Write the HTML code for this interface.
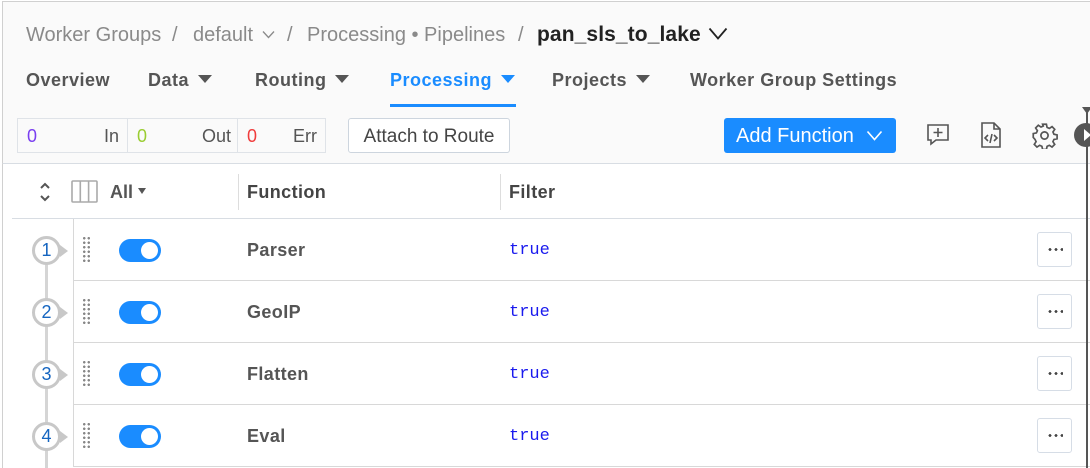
<!DOCTYPE html>
<html><head><meta charset="utf-8"><style>
*{box-sizing:border-box;margin:0;padding:0}
body{width:1090px;height:468px;overflow:hidden;background:#fff;font-family:"Liberation Sans",sans-serif;position:relative}
.a{position:absolute;white-space:nowrap}
.top{position:absolute;left:2px;top:1px;width:1088px;height:163px;background:#fafafa;border-left:1px solid #d0d0d0;border-top:1px solid #d0d0d0;border-bottom:1px solid #d8dde3}
.bc{font-size:20px;color:#8a8a8a;top:24px}
.nav{font-size:18px;font-weight:bold;color:#555;top:70px;letter-spacing:0.5px}
.tri{display:inline-block;width:0;height:0;border-left:7px solid transparent;border-right:7px solid transparent;border-top:8px solid #555;margin-left:9px;vertical-align:3px}
.stat{position:absolute;top:118px;height:35px;border:1px solid #dfe3e8;background:#fafafa;font-size:18px}
.row{position:absolute;left:73px;width:1017px;height:62px;border-left:1px solid #d8d8d8;border-bottom:1px solid #d8d8d8;background:#fff}
.num{position:absolute;left:32px;width:29px;height:29px;border-radius:50%;border:3px solid #c8c8c8;background:#fff;color:#1565c0;font-size:18px;text-align:center;line-height:23px}
.num:after{content:"";position:absolute;right:-10px;top:6px;border-top:6px solid transparent;border-bottom:6px solid transparent;border-left:8px solid #c8c8c8}
.dots{position:absolute;left:8px;top:17px;width:9px;height:27px;background-image:radial-gradient(circle,#888 1.2px,transparent 1.4px);background-size:4.5px 4.5px}
.tog{position:absolute;left:45px;top:20px;width:42px;height:23px;border-radius:12px;background:#1a8cff}
.tog:after{content:"";position:absolute;right:3px;top:3px;width:17px;height:17px;border-radius:50%;background:#fff}
.nm{position:absolute;left:173px;top:21px;font-size:18px;font-weight:bold;color:#555;letter-spacing:0.4px}
.tr{position:absolute;left:435px;top:22px;font-size:17px;font-family:"Liberation Mono",monospace;color:#1a1aee}
.more{position:absolute;left:963px;top:13px;width:35px;height:35px;border:1px solid #d6dde6;border-radius:3px;background:#fff}
.more:before{content:"";position:absolute;left:9px;top:15px;width:16px;height:3px;background-image:radial-gradient(circle,#444 1.3px,transparent 1.5px);background-size:6px 3px}
</style></head><body>
<div class="top"></div>
<div class="a bc" style="left:26px">Worker Groups</div>
<div class="a bc" style="left:172px">/</div>
<div class="a bc" style="left:193px">default</div>
<svg class="a" style="left:262px;top:30px" width="13" height="9" viewBox="0 0 13 9" fill="none" stroke="#8a8a8a" stroke-width="1.3"><path d="M1 1.5l5.5 6 5.5-6"/></svg>
<div class="a bc" style="left:287px">/</div>
<div class="a bc" style="left:307px">Processing • Pipelines</div>
<div class="a bc" style="left:518px">/</div>
<div class="a bc" style="left:537px;color:#222;font-size:21px;font-weight:bold;top:23px;letter-spacing:0.1px">pan_sls_to_lake</div>
<svg class="a" style="left:708px;top:27px" width="20" height="13" viewBox="0 0 20 13" fill="none" stroke="#222" stroke-width="1.8"><path d="M1.5 1.5l8.5 10 8.5-10"/></svg>
<div class="a nav" style="left:26px">Overview</div>
<div class="a nav" style="left:148px">Data<span class="tri"></span></div>
<div class="a nav" style="left:255px">Routing<span class="tri"></span></div>
<div class="a nav" style="left:390px;color:#1a8cff">Processing<span class="tri" style="border-top-color:#1a8cff"></span></div>
<div class="a" style="left:390px;top:104px;width:126px;height:3px;background:#1a8cff"></div>
<div class="a nav" style="left:552px">Projects<span class="tri"></span></div>
<div class="a nav" style="left:690px">Worker Group Settings</div>

<div class="stat" style="left:17px;width:111px"><span class="a" style="left:9px;top:7px;color:#7a3ff0">0</span><span class="a" style="right:8px;top:7px;color:#555">In</span></div>
<div class="stat" style="left:127px;width:111px"><span class="a" style="left:9px;top:7px;color:#9acd32">0</span><span class="a" style="right:6px;top:7px;color:#555">Out</span></div>
<div class="stat" style="left:237px;width:89px"><span class="a" style="left:9px;top:7px;color:#f03c3c">0</span><span class="a" style="right:8px;top:7px;color:#555">Err</span></div>
<div class="a" style="left:348px;top:118px;width:162px;height:35px;border:1px solid #cdd5de;border-radius:3px;background:#fff;font-size:19px;color:#444;text-align:center;line-height:35px">Attach to Route</div>
<div class="a" style="left:724px;top:118px;width:172px;height:35px;border-radius:3px;background:#1a8cff;color:#fff;font-size:20px;line-height:36px;padding-left:12px">Add Function</div>
<svg class="a" style="left:866px;top:130px" width="17" height="11" viewBox="0 0 17 11" fill="none" stroke="#fff" stroke-width="1.6"><path d="M1.5 1.5l7 8 7-8"/></svg>
<svg class="a" style="left:925px;top:122px" width="26" height="26" viewBox="0 0 26 26" fill="none" stroke="#555" stroke-width="1.6"><path d="M3 3h20v15H11l-5 4v-4H3z"/><path d="M13 6v9M8.5 10.5h9"/></svg>
<svg class="a" style="left:979px;top:121px" width="24" height="28" viewBox="0 0 24 28" fill="none" stroke="#555" stroke-width="1.6"><path d="M3 2h12l6 6v18H3z"/><path d="M15 2v6h6"/><path d="M9 14l-3 3 3 3M15 14l3 3-3 3M13 13l-2 9"/></svg>
<svg class="a" style="left:1031px;top:122px" width="27" height="27" viewBox="0 0 24 24" fill="none" stroke="#555" stroke-width="1.5"><circle cx="12" cy="12" r="3.2"/><path d="M10.3 2h3.4l.6 2.8 2 .9 2.4-1.6 2.4 2.4-1.6 2.4.9 2 2.8.6v3.4l-2.8.6-.9 2 1.6 2.4-2.4 2.4-2.4-1.6-2 .9-.6 2.8h-3.4l-.6-2.8-2-.9-2.4 1.6-2.4-2.4 1.6-2.4-.9-2L2 13.7v-3.4l2.8-.6.9-2-1.6-2.4 2.4-2.4 2.4 1.6 2-.9z"/></svg>

<div class="a" style="left:2px;top:164px;width:1px;height:304px;background:#d0d0d0"></div>
<svg class="a" style="left:38px;top:180px" width="14" height="24" viewBox="0 0 14 24" fill="none" stroke="#555" stroke-width="2"><path d="M3 8l4-4 4 4M3 16l4 4 4-4"/></svg>
<svg class="a" style="left:71px;top:180px" width="27" height="23" viewBox="0 0 27 23" fill="none" stroke="#aaa" stroke-width="1.6"><rect x="1" y="1" width="25" height="21" rx="1"/><path d="M9.3 1v21M17.6 1v21"/></svg>
<div class="a" style="left:110px;top:182px;font-size:18px;font-weight:bold;color:#555">All<span class="tri" style="border-width:6px 4.5px 0;margin-left:5px;vertical-align:4px"></span></div>
<div class="a" style="left:238px;top:174px;width:1px;height:36px;background:#ddd"></div>
<div class="a" style="left:247px;top:182px;font-size:18px;font-weight:bold;color:#444;letter-spacing:0.4px">Function</div>
<div class="a" style="left:500px;top:174px;width:1px;height:36px;background:#ddd"></div>
<div class="a" style="left:509px;top:182px;font-size:18px;font-weight:bold;color:#444;letter-spacing:0.4px">Filter</div>
<div class="a" style="left:12px;top:218px;width:1078px;height:1px;background:#d8dde3"></div>
<div class="a" style="left:45px;top:260px;width:3px;height:208px;background:#d5d5d5"></div>

<div class="row" style="top:219px"><div class="dots"></div><div class="tog"></div><div class="nm">Parser</div><div class="tr">true</div><div class="more"></div></div>
<div class="row" style="top:281px"><div class="dots"></div><div class="tog"></div><div class="nm">GeoIP</div><div class="tr">true</div><div class="more"></div></div>
<div class="row" style="top:343px"><div class="dots"></div><div class="tog"></div><div class="nm">Flatten</div><div class="tr">true</div><div class="more"></div></div>
<div class="row" style="top:405px"><div class="dots"></div><div class="tog"></div><div class="nm">Eval</div><div class="tr">true</div><div class="more"></div></div>
<div class="num a" style="top:236px">1</div>
<div class="num a" style="top:298px">2</div>
<div class="num a" style="top:360px">3</div>
<div class="num a" style="top:422px">4</div>

<div class="a" style="left:1086px;top:110px;width:2px;height:358px;background:#555"></div>
<div class="a" style="left:1082px;top:107px;border-left:5px solid transparent;border-right:5px solid transparent;border-top:7px solid #555"></div>
<div class="a" style="left:1074px;top:123px;width:24px;height:24px;border-radius:50%;background:#555"></div>
<div class="a" style="left:1084px;top:129px;border-top:6px solid transparent;border-bottom:6px solid transparent;border-left:7px solid #fff"></div>
</body></html>
